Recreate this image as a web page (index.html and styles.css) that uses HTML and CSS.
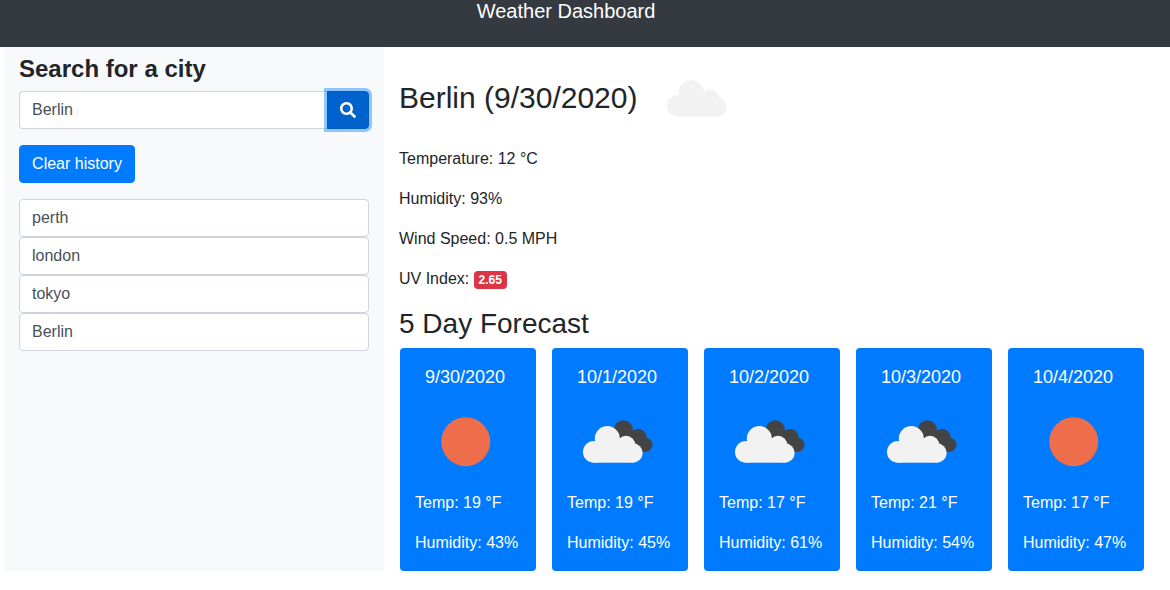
FILE: index.html
```html
<!DOCTYPE html>
<html lang="en">
<head>
  <meta charset="UTF-8">
  <title>Weather Dashboard</title>
  <meta name="viewport" content="width=device-width, initial-scale=1.0">
  <link rel="stylesheet" href="styles.css">
</head>
<body>
  <svg class="sprites" width="0" height="0">
    <symbol id="cloud-light" viewBox="3 24 60 37">
      <circle cx="13.8" cy="49.9" r="10.8"/>
      <circle cx="27.3" cy="36.5" r="12.5"/>
      <circle cx="46" cy="43" r="9.3"/>
      <circle cx="53" cy="51" r="9.7"/>
      <rect x="13.8" y="42" width="39.2" height="18.7"/>
    </symbol>
    <symbol id="cloud-dark" viewBox="0 0 80 80">
      <circle cx="43.3" cy="28" r="9.7"/>
      <circle cx="58.3" cy="35.3" r="8.3"/>
      <circle cx="65.5" cy="42.7" r="7"/>
      <polygon points="36,22 52,30 65,36 65,49.7 40,49.7"/>
    </symbol>
  </svg>

  <header class="topbar">Weather Dashboard</header>

  <main class="layout">
    <aside class="sidebar">
      <h2 class="sidebar-title">Search for a city</h2>
      <div class="search-group">
        <input class="search-input" type="text" value="Berlin">
        <button class="search-btn" aria-label="Search">
          <svg viewBox="0 0 512 512" width="16" height="16"><path fill="#fff" d="M505 442.7L405.3 343c-4.5-4.5-10.6-7-17-7H372c27.6-35.3 44-79.7 44-128C416 93.1 322.9 0 208 0S0 93.1 0 208s93.1 208 208 208c48.3 0 92.7-16.4 128-44v16.3c0 6.4 2.5 12.5 7 17l99.7 99.7c9.4 9.4 24.6 9.4 33.9 0l28.3-28.3c9.4-9.4 9.4-24.6.1-34zM208 336c-70.7 0-128-57.2-128-128 0-70.7 57.2-128 128-128 70.7 0 128 57.2 128 128 0 70.7-57.2 128-128 128z"/></svg>
        </button>
      </div>
      <button class="clear-btn">Clear history</button>
      <ul class="history">
        <li>perth</li>
        <li>london</li>
        <li>tokyo</li>
        <li>Berlin</li>
      </ul>
    </aside>

    <section class="content">
      <div class="today">
        <h1 class="today-title">Berlin (9/30/2020)</h1>
        <svg class="today-icon" width="60" height="37"><use href="#cloud-light"/></svg>
      </div>
      <p>Temperature: 12 °C</p>
      <p>Humidity: 93%</p>
      <p>Wind Speed: 0.5 MPH</p>
      <p>UV Index: <span class="badge">2.65</span></p>
      <h2 class="forecast-title">5 Day Forecast</h2>

      <div class="forecast">
        <div class="card">
          <div class="card-date">9/30/2020</div>
          <svg class="card-icon" viewBox="0 0 80 80"><circle cx="37.7" cy="39.7" r="24.5" fill="#ee6e4c"/></svg>
          <p>Temp: 19 °F</p>
          <p>Humidity: 43%</p>
        </div>
        <div class="card">
          <div class="card-date">10/1/2020</div>
          <svg class="card-icon" viewBox="0 0 80 80">
            <use href="#cloud-dark" class="cloud-back"/>
            <use href="#cloud-light" x="3" y="24" width="60" height="37"/>
          </svg>
          <p>Temp: 19 °F</p>
          <p>Humidity: 45%</p>
        </div>
        <div class="card">
          <div class="card-date">10/2/2020</div>
          <svg class="card-icon" viewBox="0 0 80 80">
            <use href="#cloud-dark" class="cloud-back"/>
            <use href="#cloud-light" x="3" y="24" width="60" height="37"/>
          </svg>
          <p>Temp: 17 °F</p>
          <p>Humidity: 61%</p>
        </div>
        <div class="card">
          <div class="card-date">10/3/2020</div>
          <svg class="card-icon" viewBox="0 0 80 80">
            <use href="#cloud-dark" class="cloud-back"/>
            <use href="#cloud-light" x="3" y="24" width="60" height="37"/>
          </svg>
          <p>Temp: 21 °F</p>
          <p>Humidity: 54%</p>
        </div>
        <div class="card">
          <div class="card-date">10/4/2020</div>
          <svg class="card-icon" viewBox="0 0 80 80"><circle cx="37.7" cy="39.7" r="24.5" fill="#ee6e4c"/></svg>
          <p>Temp: 17 °F</p>
          <p>Humidity: 47%</p>
        </div>
      </div>
    </section>
  </main>
</body>
</html>
```

FILE: styles.css
```css
* {
  box-sizing: border-box;
}
body {
  margin: 0;
  font-family: "Liberation Sans", Arial, sans-serif;
  font-size: 16px;
  line-height: 24px;
  color: #212529;
  background-color: #fff;
}
.sprites {
  position: absolute;
}
.topbar {
  height: 47px;
  padding-right: 38px;
  background-color: #343a40;
  color: #fff;
  font-size: 20px;
  line-height: 22px;
  text-align: center;
}
.layout {
  display: flex;
  padding-left: 4px;
}

/* sidebar */
.sidebar {
  width: 380px;
  height: 524px;
  padding: 8px 15px 0;
  background-color: #f8f9fa;
}
.sidebar-title {
  margin: 0 0 7px;
  font-size: 24px;
  line-height: 28px;
  font-weight: bold;
}
.search-group {
  display: flex;
  margin: 8px 0 16px;
}
.search-input {
  flex: 1;
  min-width: 0;
  height: 38px;
  padding: 6px 12px;
  font: inherit;
  color: #495057;
  background-color: #fff;
  border: 1px solid #ced4da;
  border-right: none;
  border-radius: 4px 0 0 4px;
}
.search-btn {
  display: flex;
  align-items: center;
  justify-content: center;
  width: 42px;
  height: 38px;
  padding: 0;
  background-color: #0062cc;
  border: 1px solid #005cbf;
  border-radius: 0 4px 4px 0;
  box-shadow: 0 0 0 3px rgba(38, 143, 255, .5);
}
.clear-btn {
  display: block;
  width: 116px;
  height: 38px;
  padding: 0;
  font: inherit;
  color: #fff;
  background-color: #007bff;
  border: 1px solid #007bff;
  border-radius: 4px;
}
.history {
  list-style: none;
  margin: 16px 0 0;
  padding: 0;
}
.history li {
  height: 38px;
  padding: 6px 12px;
  color: #495057;
  background-color: #fff;
  border: 1px solid #ced4da;
  border-radius: 4px;
}

/* main panel */
.content {
  flex: 1;
  padding: 32px 15px 0;
}
.content > p {
  margin: 0 0 16px;
}
.today {
  display: flex;
  align-items: center;
  margin-bottom: 30px;
}
.today-title {
  margin: 0;
  font-size: 30px;
  line-height: 38px;
  font-weight: normal;
}
.today-icon {
  margin-left: 30px;
  fill: #f2f2f2;
}
.badge {
  display: inline-block;
  padding: 3px 4.8px;
  font-size: 12px;
  line-height: 12px;
  font-weight: bold;
  color: #fff;
  background-color: #dc3545;
  border-radius: 4px;
}
.forecast-title {
  margin: 0 0 7px;
  font-size: 28px;
  line-height: 34px;
  font-weight: normal;
}
.forecast {
  display: flex;
  gap: 16px;
  padding-left: 1px;
}
.card {
  width: 136px;
  height: 223px;
  padding: 18px 15px 0;
  color: #fff;
  background-color: #007bff;
  border-radius: 4px;
}
.card-date {
  padding-right: 6px;
  font-size: 18px;
  line-height: 22px;
  text-align: center;
}
.card-icon {
  display: block;
  width: 80px;
  height: 80px;
  margin: 14px auto 9px;
  fill: #f2f2f2;
}
.cloud-back {
  fill: #444;
}
.card p {
  margin: 0 0 16px;
}
```
